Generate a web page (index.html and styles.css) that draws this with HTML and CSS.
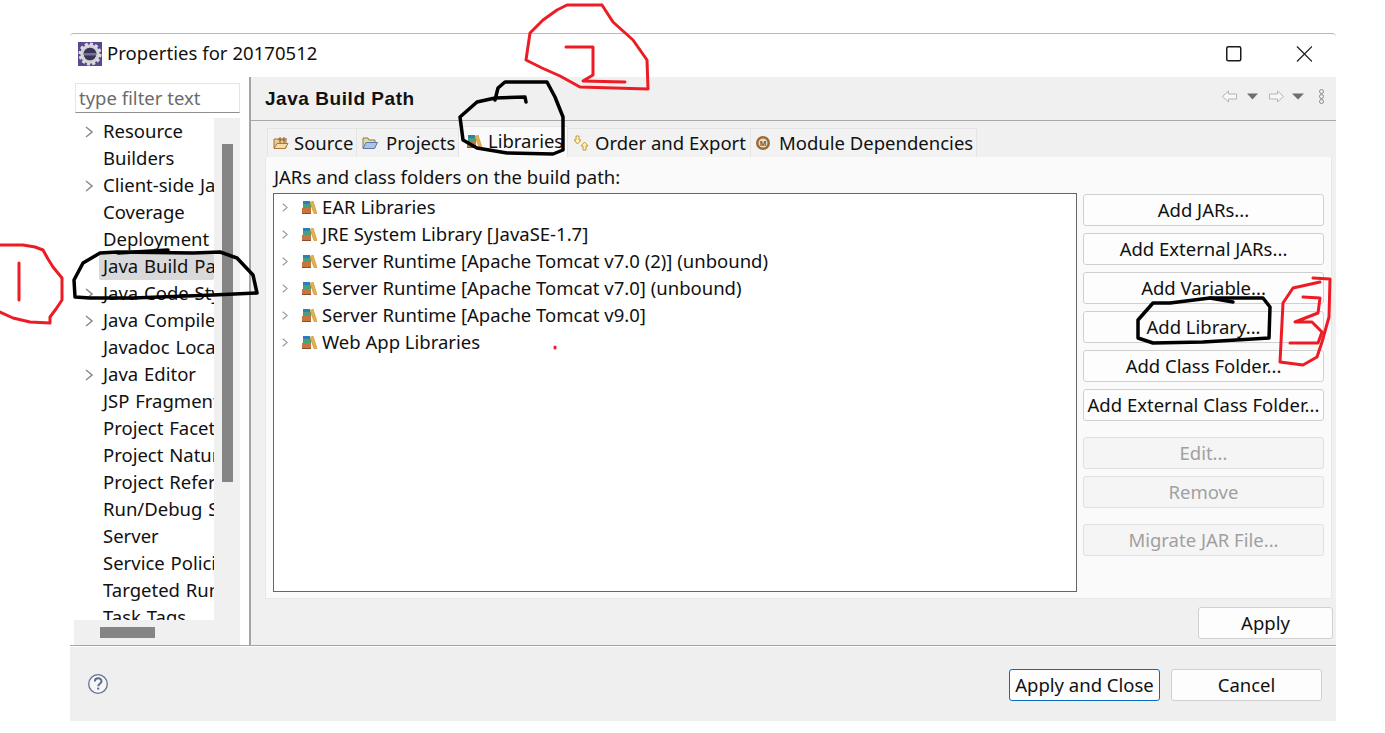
FILE: index.html
```html
<!DOCTYPE html>
<html lang="en">
<head>
    <meta charset="UTF-8">
    <meta name="viewport" content="width=device-width, initial-scale=1.0">
    <title>Properties for 20170512</title>
    <link rel="stylesheet" href="styles.css">
</head>
<body>
    <svg width="0" height="0" class="defs">
        <symbol id="twisty" viewBox="0 0 8 12">
            <path d="M1 1l6 5-6 5" fill="none" stroke="currentColor" stroke-width="1.5"/>
        </symbol>
        <symbol id="lib" viewBox="0 0 15 13">
            <rect x="1" y="0" width="7" height="3" fill="#2a7fb8"/>
            <rect x="1" y="3" width="8" height="4" fill="#4aa07a"/>
            <rect x="0" y="7" width="9" height="5" fill="#c8743e"/>
            <rect x="0" y="12" width="9" height="1" fill="#8a4f2a"/>
            <path d="M8 1.500l3-1.500 4 12.500h-3z" fill="#e8b04a" stroke="#c08a30" stroke-width=".6"/>
        </symbol>
    </svg>

    <div class="dialog">
        <div class="titlebar">
            <svg class="app-icon" width="24" height="24" viewBox="0 0 24 24">
                <rect width="24" height="24" fill="#5a4790"/>
                <circle cx="12" cy="12" r="8" fill="none" stroke="#d2d2d6" stroke-width="3.500"/>
                <circle cx="12" cy="12" r="10" fill="none" stroke="#dcdcdf" stroke-width="3" stroke-dasharray="3 2.200"/>
                <circle cx="12" cy="12" r="6.300" fill="#3a3558"/>
                <rect x="6" y="11" width="12" height="2.500" fill="#77738f"/>
            </svg>
            <span class="title-text">Properties for 20170512</span>
            <svg class="win-buttons" width="86" height="16" viewBox="0 0 86 16">
                <rect x="0.750" y="0.750" width="14" height="14" rx="1.500" fill="none" stroke="#1a1a1a" stroke-width="1.500"/>
                <path d="M71 0.500l15 15M86 0.500l-15 15" stroke="#1a1a1a" stroke-width="1.200" fill="none"/>
            </svg>
        </div>

        <div class="main">
            <div class="sidebar">
                <input class="filter" type="text" placeholder="type filter text">
                <div class="tree-wrap">
                    <ul class="tree">
                        <li class="tree-row"><span class="twist"><svg width="8" height="12"><use href="#twisty"/></svg></span><span class="tree-label">Resource</span></li>
                        <li class="tree-row"><span class="twist"></span><span class="tree-label">Builders</span></li>
                        <li class="tree-row"><span class="twist"><svg width="8" height="12"><use href="#twisty"/></svg></span><span class="tree-label">Client-side JavaScript</span></li>
                        <li class="tree-row"><span class="twist"></span><span class="tree-label">Coverage</span></li>
                        <li class="tree-row"><span class="twist"></span><span class="tree-label">Deployment Assembly</span></li>
                        <li class="tree-row"><span class="twist"></span><span class="tree-label selected">Java Build Path</span></li>
                        <li class="tree-row"><span class="twist"><svg width="8" height="12"><use href="#twisty"/></svg></span><span class="tree-label">Java Code Style</span></li>
                        <li class="tree-row"><span class="twist"><svg width="8" height="12"><use href="#twisty"/></svg></span><span class="tree-label">Java Compiler</span></li>
                        <li class="tree-row"><span class="twist"></span><span class="tree-label">Javadoc Location</span></li>
                        <li class="tree-row"><span class="twist"><svg width="8" height="12"><use href="#twisty"/></svg></span><span class="tree-label">Java Editor</span></li>
                        <li class="tree-row"><span class="twist"></span><span class="tree-label">JSP Fragment</span></li>
                        <li class="tree-row"><span class="twist"></span><span class="tree-label">Project Facets</span></li>
                        <li class="tree-row"><span class="twist"></span><span class="tree-label">Project Natures</span></li>
                        <li class="tree-row"><span class="twist"></span><span class="tree-label">Project References</span></li>
                        <li class="tree-row"><span class="twist"></span><span class="tree-label">Run/Debug Settings</span></li>
                        <li class="tree-row"><span class="twist"></span><span class="tree-label">Server</span></li>
                        <li class="tree-row"><span class="twist"></span><span class="tree-label">Service Policies</span></li>
                        <li class="tree-row"><span class="twist"></span><span class="tree-label">Targeted Runtimes</span></li>
                        <li class="tree-row"><span class="twist"></span><span class="tree-label">Task Tags</span></li>
                    </ul>
                    <div class="vscroll"><div class="vthumb"></div></div>
                    <div class="hscroll"><div class="hthumb"></div></div>
                </div>
            </div>

            <div class="content">
                <div class="page-head">
                    <h1 class="page-title">Java Build Path</h1>
                    <svg class="nav-icons" width="105" height="16" viewBox="0 0 105 16">
                        <path d="M0.500 7.500l6-5.500v3h8v5h-8v3z" fill="#f7f7f7" stroke="#b4b4b4"/>
                        <path d="M25 4.500h11l-5.500 6z" fill="#6e6e6e"/>
                        <path d="M61.500 7.500l-6-5.500v3h-8v5h8v3z" fill="#f7f7f7" stroke="#b4b4b4"/>
                        <path d="M70 4.500h12l-6 6z" fill="#6e6e6e"/>
                        <circle cx="99.500" cy="2.500" r="2" fill="none" stroke="#8a8a8a"/>
                        <circle cx="99.500" cy="7.500" r="2" fill="none" stroke="#8a8a8a"/>
                        <circle cx="99.500" cy="12.500" r="2" fill="none" stroke="#8a8a8a"/>
                    </svg>
                </div>

                <div class="tabs">
                    <div class="tab tab-source">
                        <svg width="16" height="14" viewBox="0 0 16 14"><path d="M1 12V3h4l1 1h7v8z" fill="#e9c98f" stroke="#a9773a"/><path d="M1 12.500l3-5h11l-3 5z" fill="#f3dcae" stroke="#a9773a"/><path d="M7 1v6M11 1v6M5 3h9" stroke="#8a5a2a"/></svg>
                        <span>Source</span>
                    </div>
                    <div class="tab tab-projects">
                        <svg width="16" height="14" viewBox="0 0 16 14"><path d="M1 12V2h5l1 2h6v8z" fill="#e6d9a8" stroke="#8a7a4a"/><path d="M1 12.500l3-6h11.500l-3 6z" fill="#a9c4e6" stroke="#5a78a8"/></svg>
                        <span>Projects</span>
                    </div>
                    <div class="tab tab-active tab-libraries">
                        <svg width="15" height="13"><use href="#lib"/></svg>
                        <span>Libraries</span>
                    </div>
                    <div class="tab tab-order">
                        <svg width="16" height="16" viewBox="0 0 16 16"><path d="M3 1h3v4h2l-3.500 4-3.500-4h2z" fill="#fff3c4" stroke="#c09a3a"/><path d="M11 15h3v-4h2l-3.500-4-3.500 4h2z" transform="translate(-1 0)" fill="#fff3c4" stroke="#c09a3a"/></svg>
                        <span>Order and Export</span>
                    </div>
                    <div class="tab tab-module">
                        <svg width="14" height="14" viewBox="0 0 14 14"><circle cx="7" cy="7" r="7" fill="#9a6a35"/><circle cx="7" cy="7" r="4.500" fill="#e8dccb"/><text x="7" y="9.500" text-anchor="middle" class="module-m">M</text></svg>
                        <span>Module Dependencies</span>
                    </div>
                </div>

                <div class="panel">
                    <div class="panel-label">JARs and class folders on the build path:</div>
                    <div class="panel-body">
                        <ul class="lib-list">
                            <li class="lib-row"><svg class="lib-twist" width="6" height="9"><use href="#twisty"/></svg><svg width="15" height="13"><use href="#lib"/></svg><span>EAR Libraries</span></li>
                            <li class="lib-row"><svg class="lib-twist" width="6" height="9"><use href="#twisty"/></svg><svg width="15" height="13"><use href="#lib"/></svg><span>JRE System Library [JavaSE-1.7]</span></li>
                            <li class="lib-row"><svg class="lib-twist" width="6" height="9"><use href="#twisty"/></svg><svg width="15" height="13"><use href="#lib"/></svg><span>Server Runtime [Apache Tomcat v7.0 (2)] (unbound)</span></li>
                            <li class="lib-row"><svg class="lib-twist" width="6" height="9"><use href="#twisty"/></svg><svg width="15" height="13"><use href="#lib"/></svg><span>Server Runtime [Apache Tomcat v7.0] (unbound)</span></li>
                            <li class="lib-row"><svg class="lib-twist" width="6" height="9"><use href="#twisty"/></svg><svg width="15" height="13"><use href="#lib"/></svg><span>Server Runtime [Apache Tomcat v9.0]</span></li>
                            <li class="lib-row"><svg class="lib-twist" width="6" height="9"><use href="#twisty"/></svg><svg width="15" height="13"><use href="#lib"/></svg><span>Web App Libraries</span></li>
                        </ul>
                        <div class="btn-col">
                            <button class="btn">Add JARs...</button>
                            <button class="btn">Add External JARs...</button>
                            <button class="btn">Add Variable...</button>
                            <button class="btn">Add Library...</button>
                            <button class="btn">Add Class Folder...</button>
                            <button class="btn">Add External Class Folder...</button>
                            <button class="btn btn-off btn-sep">Edit...</button>
                            <button class="btn btn-off">Remove</button>
                            <button class="btn btn-off btn-sep">Migrate JAR File...</button>
                        </div>
                    </div>
                </div>

                <div class="apply-row">
                    <button class="btn btn-apply">Apply</button>
                </div>
            </div>
        </div>

        <div class="footer">
            <svg class="help" width="20" height="20" viewBox="0 0 20 20">
                <circle cx="10" cy="10" r="9.300" fill="#f6f6f8" stroke="#63738f" stroke-width="1.300"/>
                <path d="M6.800 7.500c0-4.300 6.700-4.300 6.700-.3 0 2.600-3.300 2.500-3.300 5" fill="none" stroke="#5a6a88" stroke-width="1.900"/>
                <rect x="9.200" y="13.600" width="2" height="2" fill="#5a6a88"/>
            </svg>
            <div class="footer-btns">
                <button class="btn btn-default">Apply and Close</button>
                <button class="btn btn-cancel">Cancel</button>
            </div>
        </div>
    </div>

    <!-- hand drawn marks on top of the screenshot -->
    <svg class="marks" width="1385" height="733" viewBox="0 0 1385 733">
        <g class="mark-red">
            <path d="M0 245L23 245L35 247L43 250L48 259L53 267L62 278L62 300L56 309L50 317L50 323L30 322L13 318L0 312"/>
            <path d="M19 263L19 300"/>
            <path d="M602 5L567 5L557 10L543 20L530 33L526 60L542 68L560 76L580 87L648 89L647 60L633 40L613 22L602 5"/>
            <path d="M566 47L593 47L593 75L583 81L625 82"/>
            <path d="M1313 278L1330 279L1329 317L1322 342L1317 357L1303 365L1280 362L1283 303L1293 288L1320 282"/>
            <path d="M1303 297L1320 298L1318 313L1295 322L1312 322L1322 332L1318 343L1290 343"/>
            <path d="M555 347L555 348"/>
        </g>
        <g class="mark-black">
            <path d="M75 297L74 280L83 263L100 253L117 252L193 253L220 252L237 258L253 275L257 293L213 295L133 298L90 298L75 297"/>
            <path d="M118 253L168 250"/>
            <path d="M495 100L498 88L505 82L547 82L555 97L563 117L563 150L553 154L507 153L477 148L463 140L460 117L477 102L495 98L525 97L526 102"/>
            <path d="M1210 298L1233 302"/>
            <path d="M1210 298L1263 298L1270 307L1269 338L1203 342L1153 343L1138 338L1138 320L1153 303L1170 303L1210 298"/>
        </g>
    </svg>
</body>
</html>
```

FILE: styles.css
```css
* {
  box-sizing: border-box;
}

body {
  margin: 0;
  background-color: #fff;
  font-family: "Noto Sans", "Open Sans", sans-serif;
  font-size: 18.5px;
  color: #111;
  overflow: hidden;
}

.defs {
  display: block;
}

.dialog {
  width: 1266px;
  height: 688px;
  margin: 33px 0 0 70px;
  display: flex;
  flex-direction: column;
}

/* title bar */
.titlebar {
  height: 44px;
  display: flex;
  align-items: center;
  padding: 0 0 4px 8px;
  border-top: 1px solid #b9b9b9;
  border-top-left-radius: 4px;
  border-top-right-radius: 4px;
  background-color: #fff;
}

.app-icon {
  margin-right: 5px;
}

.title-text {
  margin-top: -2px;
  letter-spacing: 0.05px;
}

.win-buttons {
  margin-left: auto;
  margin-right: 24px;
}

/* main area */
.main {
  height: 568px;
  display: flex;
}

.sidebar {
  width: 181px;
  padding: 6px 0 0 4px;
  border-right: 2px solid #a5a5a5;
  background-color: #fff;
  display: flex;
  flex-direction: column;
}

.filter {
  width: 165px;
  height: 30px;
  margin-left: 1px;
  padding: 0 3px 2px;
  font: inherit;
  border: 1px solid #e6e6e6;
  border-bottom-color: #8f8f8f;
  outline: none;
}

.filter::placeholder {
  color: #6b6b6b;
  opacity: 1;
}

.tree-wrap {
  margin-top: 5px;
  width: 166px;
  height: 527px;
  display: grid;
  grid-template-columns: 140px 26px;
  grid-template-rows: 502px 25px;
}

.tree {
  list-style-type: none;
  margin: 0;
  padding: 0;
  overflow: hidden;
}

.tree-row {
  height: 27px;
  display: flex;
  align-items: center;
}

.twist {
  width: 25px;
  flex: none;
  padding-left: 11px;
  color: #8c8c8c;
  display: flex;
  align-items: center;
}

.tree-label {
  flex: 1;
  min-width: 0;
  height: 27px;
  line-height: 25px;
  padding-left: 4px;
  word-spacing: 1px;
  white-space: nowrap;
  overflow: hidden;
}

.selected {
  background-color: #d9d9d9;
  border-radius: 2px;
}

.vscroll {
  background-color: #f0f0f0;
  padding: 26px 0 0 8px;
}

.vthumb {
  width: 11px;
  height: 338px;
  background-color: #858585;
}

.hscroll {
  grid-column: 1 / 3;
  background-color: #f0f0f0;
  padding: 7px 0 0 26px;
}

.hthumb {
  width: 55px;
  height: 11px;
  background-color: #858585;
}

/* right side */
.content {
  flex: 1;
  background-color: #f0f0f0;
  display: flex;
  flex-direction: column;
}

.page-head {
  height: 44px;
  display: flex;
  align-items: center;
  padding: 0 9px 0 14px;
  border-bottom: 1px solid #a8a8a8;
}

.page-title {
  margin: 0;
  font-size: 19px;
  font-weight: 700;
  font-family: "Liberation Sans", sans-serif;
  letter-spacing: 0.55px;
}

.nav-icons {
  margin-left: auto;
  margin-top: -4px;
}

.tabs {
  display: flex;
  align-items: flex-end;
  height: 31px;
  margin: 5px 0 0 16px;
}

.tab {
  height: 29px;
  display: flex;
  align-items: center;
  gap: 5px;
  padding-left: 5px;
  background-color: #f2f2f2;
  border: 1px solid #e4e4e4;
  border-bottom: none;
  border-left: none;
}

.tab span {
  margin-top: -2px;
}

.tab:first-child {
  border-left: 1px solid #e4e4e4;
}

.tab-active {
  height: 31px;
  padding-bottom: 2px;
  background-color: #fafafa;
}

.tab-source {
  width: 90px;
}

.tab-projects {
  width: 102px;
  gap: 8px;
}

.tab-libraries {
  width: 109px;
  padding-left: 8px;
  gap: 6px;
}

.tab-order {
  width: 183px;
  gap: 6px;
}

.tab-module {
  width: 226px;
  gap: 9px;
}

.module-m {
  font-size: 7px;
  font-weight: 700;
  fill: #7a5228;
}

.panel {
  width: 1067px;
  height: 442px;
  margin-left: 14px;
  padding: 0 7px 7px;
  background-color: #fafafa;
  border: 1px solid #e8e8e8;
  border-top: none;
}

.panel-label {
  height: 36px;
  line-height: 39px;
  padding-left: 1px;
}

.panel-body {
  display: flex;
  gap: 6px;
}

.lib-list {
  list-style-type: none;
  width: 804px;
  height: 399px;
  margin: 0;
  padding: 0;
  background-color: #fff;
  border: 1px solid #666;
}

.lib-row {
  height: 27px;
  display: flex;
  align-items: center;
  padding-left: 8px;
}

.lib-twist {
  color: #9a9a9a;
  margin-right: 14px;
}

.lib-row span {
  margin: -2px 0 0 5px;
}

.btn-col {
  width: 241px;
  padding-top: 1px;
  display: flex;
  flex-direction: column;
  gap: 7px;
}

.btn {
  height: 32px;
  padding: 0 0 2px;
  font: inherit;
  color: #111;
  background-color: #fdfdfd;
  border: 1px solid #d0d0d0;
  border-radius: 3px;
  white-space: nowrap;
}

.btn-off {
  color: #a0a0a0;
  background-color: #f5f5f5;
  border-color: #e0e0e0;
}

.btn-sep {
  margin-top: 9px;
}

.apply-row {
  display: flex;
  justify-content: flex-end;
  padding: 8px 3px 0 0;
}

.btn-apply {
  width: 135px;
}

/* footer */
.footer {
  height: 76px;
  display: flex;
  align-items: center;
  padding: 0 14px 0 18px;
  background-color: #efefef;
  border-top: 1px solid #a5a5a5;
  box-shadow: inset 0 1px 0 #fff;
}

.help {
  margin-top: 1px;
}

.footer-btns {
  margin: 2px 0 0 auto;
  display: flex;
  gap: 11px;
}

.btn-default {
  width: 151px;
  padding: 0;
  border-color: #0a6cc0;
}

.btn-cancel {
  width: 151px;
  padding: 0;
}

/* annotations */
.marks {
  position: absolute;
  left: 0;
  top: 0;
}

.marks path {
  fill: none;
  stroke-linejoin: round;
  stroke-linecap: round;
}

.mark-red path {
  stroke: #ed1c24;
  stroke-width: 3;
}

.mark-black path {
  stroke: #000;
  stroke-width: 3.5;
}
```
